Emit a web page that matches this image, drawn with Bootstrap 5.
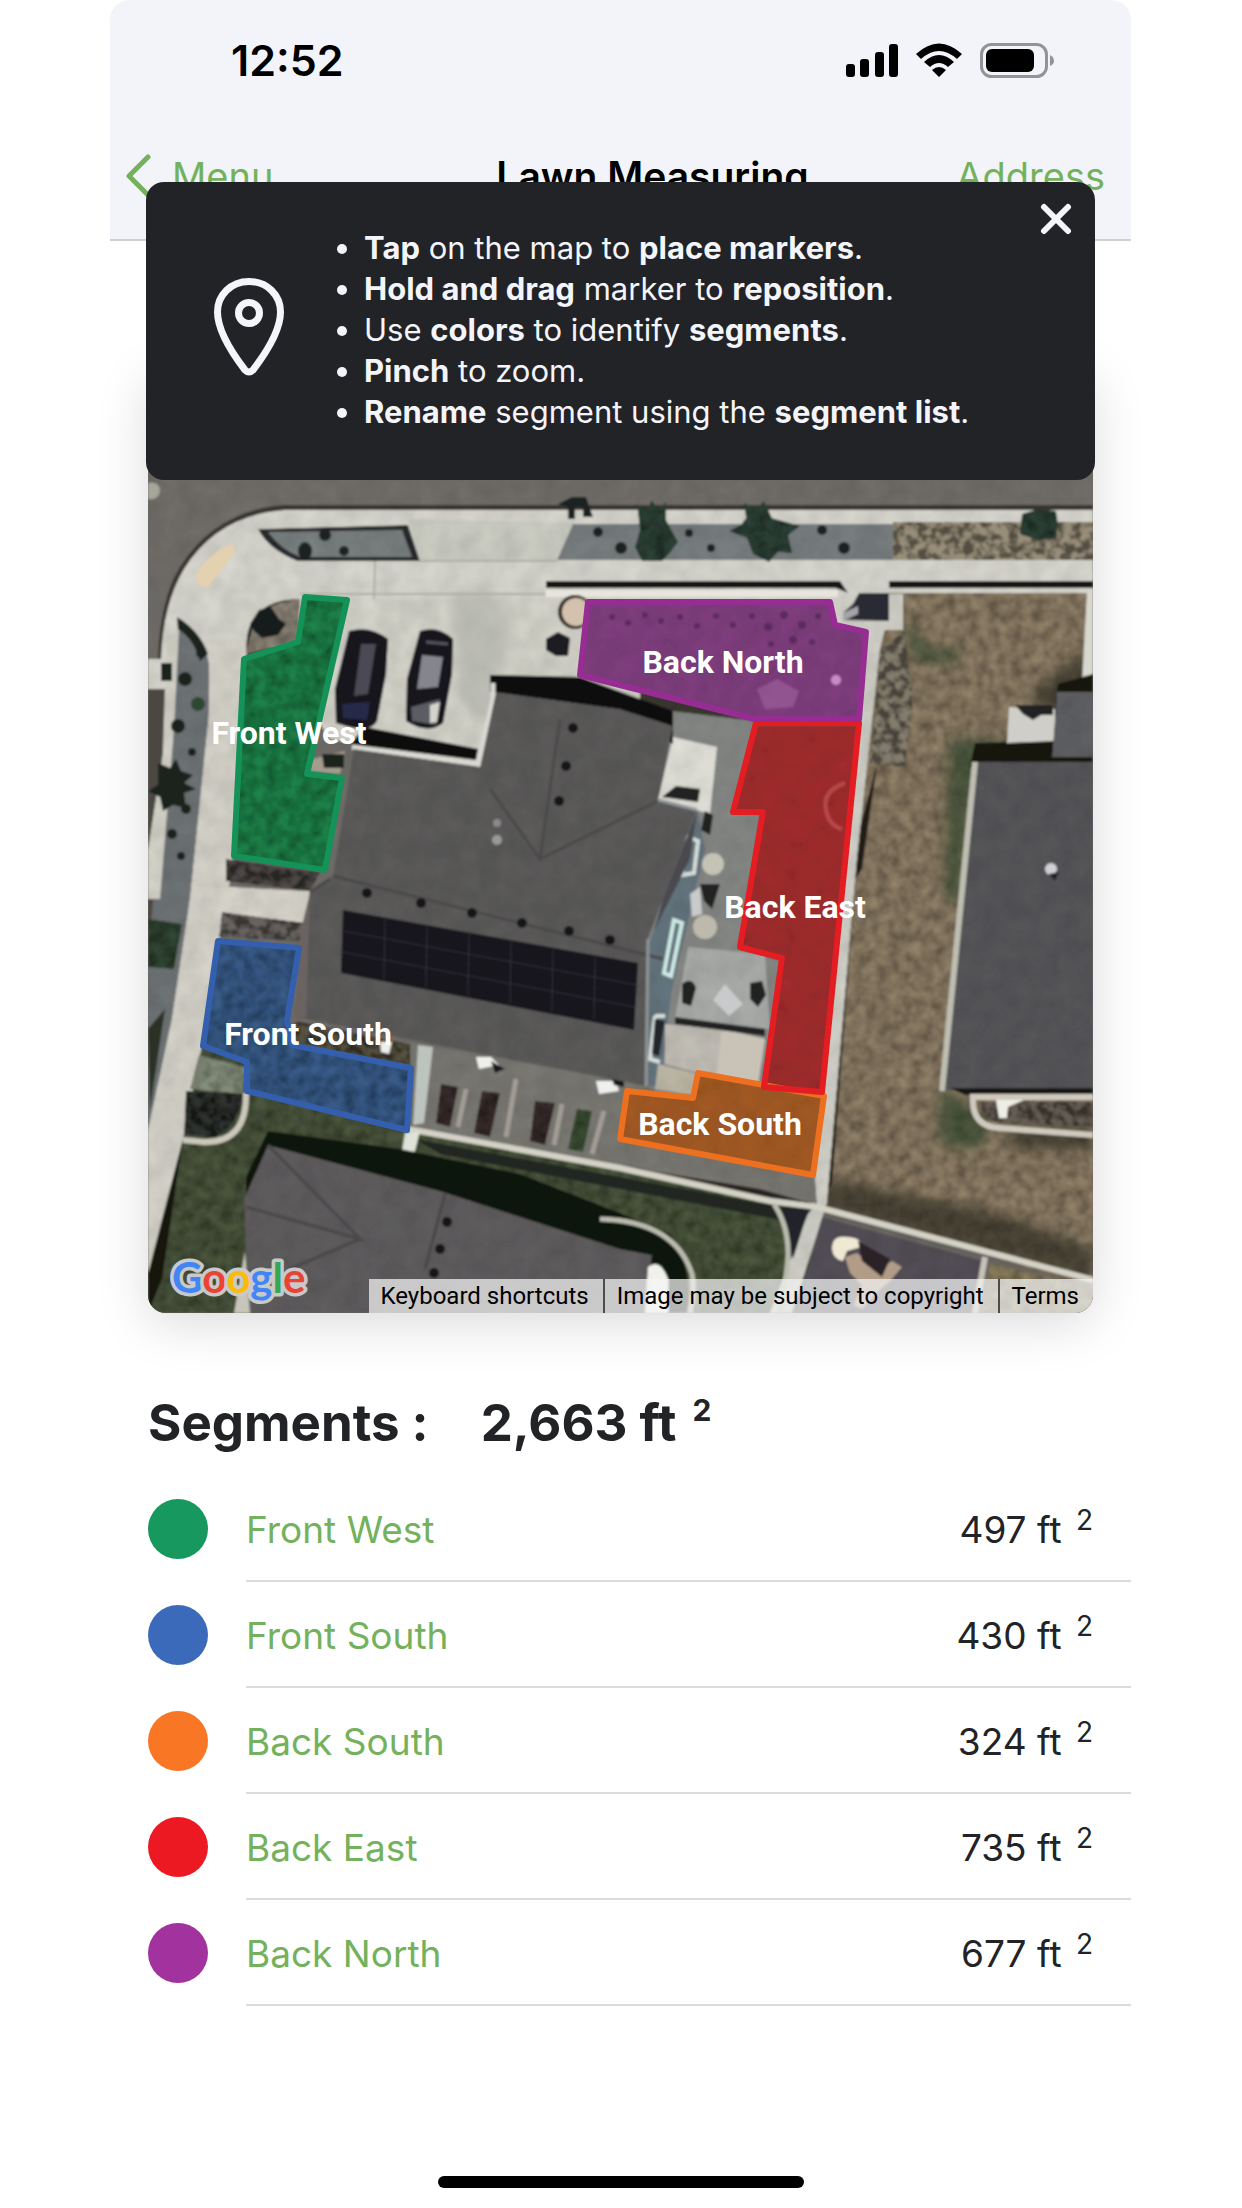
<!DOCTYPE html>
<html lang="en">
<head>
<meta charset="utf-8">
<meta name="viewport" content="width=device-width, initial-scale=1">
<title>Lawn Measuring</title>
<link href="https://cdn.jsdelivr.net/npm/bootstrap@5.3.0/dist/css/bootstrap.min.css" rel="stylesheet">
<style>
  body { font-family: Inter, "Noto Sans", sans-serif; color: #222326; background: #fff; }
  .phone { margin: 0 111px 0 110px; min-height: 100vh; }
  .top-area { background: #f3f4f9; border-bottom: 2px solid #cfd0d4; border-radius: 20px 20px 0 0; }
  .status { height: 120px; padding: 0 76px 0 121px; color: #000; }
  .clock { font-size: 43px; font-weight: 600; line-height: 48px; }
  .titlebar { height: 119px; padding: 0 26px 8px 14px; font-size: 38px; line-height: 48px; }
  .titlebar a, .seg-name { color: #74b15c; text-decoration: none; }
  .titlebar h1 { font-size: 39px; line-height: 48px; font-weight: 600; color: #000; padding-left: 76px; }
  .side { flex: 1 1 0; }
  .tips { top: 182px; left: 36px; right: 36px; height: 298px; background: #222327; color: #f4f5fa; border-radius: 18px; padding: 0 68px 4px; z-index: 5; }
  .tips ul { font-size: 31px; line-height: 41px; padding-left: 37px; margin-left: 43px; }
  .tips-close { top: 14px; right: 16px; width: 46px; height: 46px; color: inherit; }
  .map-card { margin: 128px 38px 0; border-radius: 18px; box-shadow: 0 10px 52px rgba(0,0,0,.15); }
  .map-clip { border-radius: 18px; background: #5a5a58; }
  .map-label { font: 700 32px Roboto, sans-serif; fill: #fff; text-anchor: middle; }
  .brand { font: 700 42px Lato, sans-serif; stroke: #c9c9c9; stroke-width: 7px; stroke-linejoin: round; paint-order: stroke; }
  .attrib { right: 0; bottom: 0; font: 400 24px/34px Roboto, sans-serif; }
  .attrib > * { color: #000; background: rgba(245,245,245,.72); padding: 0 14px 0 12px; text-decoration: none; border: 0; font: inherit; }
  .attrib > * + * { border-left: 2px solid #4c4c4a; }
  .segments { padding-left: 38px; }
  .seg-title { font-size: 51px; line-height: 60px; font-weight: 700; margin: 80px 0 23px; gap: 52px; }
  .seg-title sup { font-size: 30px; top: -20px; line-height: 0; margin-left: 4px; }
  .seg-row { height: 106px; gap: 38px; }
  .swatch { width: 60px; height: 60px; border-radius: 50%; flex: none; }
  .seg-body { border-bottom: 2px solid #dcdcde; padding: 4px 38px 0 0; font-size: 37px; line-height: 46px; }
  .seg-body sup { font-size: 28px; top: -13px; line-height: 0; margin-left: 4px; }
  .home-bar { width: 366px; height: 12px; border-radius: 6px; background: #000; margin: 170px auto 19px; }
</style>
</head>
<body>
<div class="phone position-relative d-flex flex-column">
  <header class="top-area">
    <div class="status d-flex align-items-center justify-content-between">
      <span class="clock">12:52</span>
      <svg width="210" height="36" viewBox="0 0 210 36" aria-hidden="true">
        <g><rect x="1" y="22" width="9" height="13" rx="3"/><rect x="15" y="17" width="9" height="18" rx="3"/><rect x="30" y="10" width="9" height="25" rx="3"/><rect x="44" y="2" width="9" height="33" rx="3"/></g>
        <path d="M71 12Q94-9 117 12L112 17Q94 1 76 17ZM79 20Q94 6 109 20L103 25Q94 17 85 25ZM87 28Q94 22 101 28L94 35Z"/>
        <rect x="136.500" y="2.500" width="65" height="32" rx="10" fill="none" stroke="#929397" stroke-width="3"/>
        <rect x="141" y="7" width="48" height="23" rx="6"/><path d="M205 13Q209 15 209 19Q209 22 205 24Z" fill="#929397"/>
      </svg>
    </div>
    <nav class="titlebar d-flex align-items-center">
      <a href="#" class="side d-flex align-items-center">
        <svg width="28" height="44" viewBox="0 0 28 44" class="me-3" aria-hidden="true"><path d="M24 3L5 22L24 41" fill="none" stroke="#74b15c" stroke-width="5" stroke-linecap="round" stroke-linejoin="round"/></svg>
        <span class="ps-1">Menu</span></a>
      <h1 class="m-0">Lawn Measuring</h1>
      <a href="#" class="side text-end">Address</a>
    </nav>
  </header>

  <aside class="tips position-absolute d-flex align-items-center" role="dialog" aria-label="Map tips">
    <svg width="70" height="98" viewBox="0 0 70 98" class="mb-1" aria-hidden="true" fill="none" stroke="#f4f5fa" stroke-width="7" stroke-linejoin="round">
      <path d="M35 3.500C17 3.500 3.500 17 3.500 34C3.500 52 18 75 31 92Q35 96 39 92C52 75 66.500 52 66.500 34C66.500 17 53 3.500 35 3.500Z"/><circle cx="35" cy="35" r="10.500"/></svg>
    <ul class="mb-0">
      <li><b>Tap</b> on the map to <b>place markers</b>.</li>
      <li><b>Hold and drag</b> marker to <b>reposition</b>.</li>
      <li>Use <b>colors</b> to identify <b>segments</b>.</li>
      <li><b>Pinch</b> to zoom.</li>
      <li><b>Rename</b> segment using the <b>segment list</b>.</li>
    </ul>
    <button type="button" class="tips-close btn p-0 border-0 position-absolute d-flex align-items-center justify-content-center" aria-label="Close">
      <svg width="32" height="32" viewBox="0 0 32 32" aria-hidden="true"><path d="M4 4L28 28M28 4L4 28" stroke="#f4f5fa" stroke-width="6" stroke-linecap="round"/></svg>
    </button>
  </aside>

  <main>
    <section class="map-card position-relative">
      <div class="map-clip overflow-hidden position-relative">
      <svg class="d-block w-100" viewBox="148 370 945 944" role="img" aria-label="Satellite map with lawn segments">
        <defs>
          <filter id="grain" x="0" y="0" width="100%" height="100%">
            <feTurbulence type="fractalNoise" baseFrequency="0.09" numOctaves="4" seed="4" result="n"/>
            <feColorMatrix in="n" type="matrix" values="1.5 0 0 0 -.25  1.5 0 0 0 -.25  1.5 0 0 0 -.25  0 0 0 0 1" result="g"/>
            <feComposite in="SourceGraphic" in2="g" operator="arithmetic" k1=".9" k2=".55" k3="0" k4="0" result="m"/>
            <feComposite in="m" in2="SourceGraphic" operator="in"/>
          </filter>
          <filter id="fine" x="0" y="0" width="100%" height="100%">
            <feTurbulence type="fractalNoise" baseFrequency="0.05" numOctaves="4" seed="9" result="n"/>
            <feColorMatrix in="n" type="matrix" values="1 0 0 0 0  1 0 0 0 0  1 0 0 0 0  0 0 0 0 1" result="g"/>
            <feComposite in="SourceGraphic" in2="g" operator="arithmetic" k1=".3" k2=".85" k3="0" k4="0" result="m"/>
            <feComposite in="m" in2="SourceGraphic" operator="in"/>
          </filter>
          <filter id="rocks" x="0" y="0" width="100%" height="100%">
            <feTurbulence type="fractalNoise" baseFrequency="0.11" numOctaves="3" seed="21" result="n"/>
            <feColorMatrix in="n" type="matrix" values="4 0 0 0 -1.500  4 0 0 0 -1.500  4 0 0 0 -1.500  0 0 0 0 1" result="g"/>
            <feComposite in="SourceGraphic" in2="g" operator="arithmetic" k1=".9" k2=".35" k3="0" k4="0" result="m"/>
            <feComposite in="m" in2="SourceGraphic" operator="in"/>
          </filter>
          <filter id="soft"><feGaussianBlur stdDeviation="6"/></filter>
          <filter id="photo" x="0" y="0" width="100%" height="100%"><feGaussianBlur stdDeviation="1"/></filter>
        </defs>

        <g filter="url(#photo)">
        <rect x="140" y="360" width="960" height="960" fill="#6c6965"/>
        <!-- street and pavement -->
        <g filter="url(#fine)">
          <rect x="148" y="370" width="945" height="944" fill="#6c6965"/>
          <path d="M1093 506H283Q215 512 180 568Q160 600 158 660V720H1093Z" fill="#38352f"/>
          <path d="M1093 511H285Q218 516 184 570Q163 605 161 660H148V692H164L157 900L148 960V1275L185 1140L232 870L246 655L330 600L480 770L560 680H1093Z" fill="#cfcec6"/>
          <path d="M240 600H640V700L480 768L330 740Z" fill="#cbcac1"/>
          <path d="M408 520L575 524L556 562H420Z" fill="#c3c5bb"/>
        </g>
        <path d="M450 590h45l15 50l-20 90l-30-30z" fill="#aeb0a8" opacity=".6" filter="url(#soft)"/>
        <path d="M300 595H545M375 562L374 600M420 562H557M210 781H234" stroke="#aeada5" stroke-width="2" fill="none"/>
        <path d="M148 484q12-2 12 8q-2 10-12 8z" fill="#a7a69b"/>
        <path d="M196 575Q212 552 232 545Q238 552 228 562L208 588Q196 588 196 575Z" fill="#e4d1b0"/>
        <g filter="url(#fine)">
          <path d="M258 530L408 526L420 562H297Q268 550 258 530Z" fill="#25292a"/>
          <path d="M268 533L402 531L412 558H300Q280 550 268 533Z" fill="#747a7a"/>
          <path d="M573 525H893V561H557Z" fill="#73797a"/>
        </g>
        <g fill="#1c2321"><ellipse cx="305" cy="552" rx="7" ry="9"/><circle cx="325" cy="536" r="6"/><circle cx="344" cy="552" r="5"/><circle cx="598" cy="533" r="5"/><circle cx="621" cy="549" r="6"/><circle cx="689" cy="534" r="4"/><circle cx="711" cy="549" r="4"/><circle cx="822" cy="531" r="5"/><circle cx="844" cy="549" r="6"/><path d="M558 505l14-7h14l7 20h-10v-10h-8v12h-7v-12z"/></g>
        <path d="M893 523H1093V561H893Z" fill="#89806d" filter="url(#rocks)"/>
        <g fill="#26382f" filter="url(#grain)"><path d="M637 505l12 6 2-10 8 9 7-7v18l12 22-8 11-8 8h-20l-7-14 5-17z"/><path d="M744 504l13 6 7-8 8 17 28 8-12 9 4 18-14-1-9 10-16-8-6-16-18-7 12-6 5-7z"/><path d="M1022 515l16-5 18 2 2 14-2 13-18 2-18-6z"/></g>
        <path d="M546 582H840L848 594L836 589H546ZM889 582H1093V589H889Z" fill="#171715"/>
        <path d="M546 591H838V598H546Z" fill="#e7e5dd"/>

        <!-- left verge -->
        <path d="M148 690H165L155 1000L148 1060Z" fill="#4c4742"/>
        <g filter="url(#fine)">
          <path d="M178 620Q206 640 209 665L209 715L190 900L172 1020L148 1133V950L163 800L175 700Z" fill="#696e70"/>
          <path d="M167 640L179 630L174 730L160 900L148 900V850L165 740Z" fill="#cbcac0"/>
        </g>
        <g fill="#1a241f"><path d="M177 618Q200 632 208 655L200 662Q194 640 178 630Z"/><circle cx="201" cy="654" r="5"/><circle cx="185" cy="680" r="7"/><circle cx="198" cy="705" r="7" fill="#2d4633"/><circle cx="178" cy="727" r="7"/><circle cx="192" cy="753" r="4"/><path d="M158 764l12 5 6-9 5 12 12 4-9 8 12 6-12 4 2 15-13-3-10 6-3-14-12-6 10-6z"/><circle cx="186" cy="810" r="5"/><circle cx="172" cy="835" r="5"/><circle cx="181" cy="857" r="4"/><rect x="161" y="664" width="11" height="18"/></g>
        <path d="M148 920L182 925L174 970L148 968Z" fill="#293b2b" filter="url(#grain)"/>
        <path d="M148 1030L165 1010L150 1110Z" fill="#2b3328"/>

        <!-- lawns to the south -->
        <path d="M148 1270L202 1047L250 1066L415 1128L620 1170L820 1205L800 1314H148Z" fill="#404a34" filter="url(#grain)"/>
        <path d="M183 1140L148 1270V1314L162 1280Z" fill="#14170f"/>
        <path d="M210 640L248 640L232 857L222 913L202 1047L183 1140L148 1275V1130L172 1020L190 900L208 740Z" fill="#cccac1" filter="url(#fine)"/>
        <path d="M195 886L310 892L306 924L222 915Z" fill="#cfccc3" filter="url(#fine)"/>
        <path d="M222 913L304 924L302 942L219 938Z" fill="#5e5956" filter="url(#rocks)"/>
        <path d="M226 860L320 873L310 892L226 882Z" fill="#45403e" filter="url(#rocks)"/>
        <path d="M199 1056L245 1068L243 1095L190 1090Z" fill="#77806f" filter="url(#grain)"/>
        <path d="M186 1092L243 1095Q240 1125 215 1138L184 1135Z" fill="#292c29" filter="url(#rocks)"/>
        <path d="M246 1094Q247 1144 204 1143L183 1141" fill="none" stroke="#cbc8bb" stroke-width="6"/>

        <!-- corner bed -->
        <path d="M246 655Q244 600 300 600L298 643Z" fill="#7b7468" filter="url(#grain)"/>
        <path d="M250 625l9-14 12-3 8 12 7 5-8 11-16 3-8-7zM247 650Q244 602 300 600Q254 606 252 630Z" fill="#181a1c"/>

        <!-- east yard -->
        <g filter="url(#grain)">
          <path d="M883 594H1093V1290L817 1205Z" fill="#7c6e59"/>
        </g>
        <g filter="url(#soft)" opacity=".65"><path d="M900 620L930 650H960L955 665L915 660ZM950 740L1000 740L970 800L960 900H945ZM940 1090L990 1120L980 1150L940 1145Z" fill="#263f25"/><path d="M1035 690L1090 650V710H1035ZM830 1180L1000 1215L1093 1250V1280L820 1210ZM1010 1130H1093V1150H1010Z" fill="#25271c"/></g>
        <path d="M880 650L905 632L913 700L905 768L870 765Z" fill="#777062" filter="url(#rocks)"/>
        <path d="M877 765L862 870L855 880L832 1185L822 1200L846 880Z" fill="#211f19"/>
        <path d="M842 595H903V631H885L880 650L857 860L827 1204L792 1314H770L812 1204L842 870L870 632L843 624Z" fill="#c8c8c0" filter="url(#fine)"/>
        <path d="M844 613L853 605L859 594H889V622L845 621Z" fill="#2c2b34"/><path d="M843 614l15-7v8l-15 7z" fill="#a4a4aa"/>
        <path d="M1087 592H1093V675L1082 683Z" fill="#d8d7d0"/>

        <!-- neighbouring houses -->
        <path d="M1058 685L1093 675V775L970 768L975 744L1050 742Z" fill="#121310"/>
        <path d="M1009 708L1055 710V742L1007 744Z" fill="#cfcec8"/><path d="M1015 706h38v10h-12l-8 5-10-6z" fill="#222"/>
        <g filter="url(#fine)"><path d="M1057 693H1093V758H1052Z" fill="#5b5c5f"/><path d="M975 763H1093V1091H944Z" fill="#525255"/></g>
        <path d="M975 763L942 1092" stroke="#bdbdb1" stroke-width="6"/><path d="M950 1089H1093V1096H965Z" fill="#141414"/>
        <circle cx="1051" cy="870" r="6" fill="#cfd0d2"/><path d="M1049 875l10-2-4 9z" fill="#232326"/>
        <path d="M970 1098H1093M973 1100Q972 1128 1000 1129L1093 1136" fill="none" stroke="#cfc9bd" stroke-width="6"/>
        <path d="M980 1103H1093V1128L1000 1124Q981 1120 980 1103Z" fill="#5b534b" filter="url(#rocks)"/><path d="M996 1101h28l-16 7-1 11h-8z" fill="#eeeee6"/>

        <!-- east patio -->
        <g filter="url(#fine)">
          <path d="M673 712L755 722L733 813L760 815L740 950L782 962L764 1090L645 1100L640 940Z" fill="#808280"/>
          <path d="M673 738L717 748L710 815L658 800Z" fill="#d8d8d0"/>
          <path d="M697 810L663 900L649 945L648 1087L660 1087L672 990L705 850Z" fill="#607079"/>
          <path d="M688 948L765 955L770 1030L675 1020Z" fill="#a3a5a3"/>
          <path d="M665 1025L722 1030L765 1040L758 1086L720 1080L665 1065Z" fill="#b9b6ae"/>
          <path d="M658 1065L698 1075L692 1096L655 1090Z" fill="#b6b09f"/>
        </g>
        <path d="M722 1030L765 1040L758 1086L716 1078Z" fill="#c8c3b6"/>
        <path d="M662 798L676 787L700 790L698 803ZM705 812l8 4-3 20-9-5zM675 1018L765 1030V1037L675 1025ZM682 985q10-8 14 4l-5 18-9-3zM750 984l12-2 4 14-8 12-8-8zM700 885l20 0-8 25-8-8z" fill="#202224"/>
        <g fill="none" stroke="#d5dbd9" stroke-width="4"><path d="M688 838L698 842L694 874L682 876Z"/><path d="M674 921L682 924L671 977L664 974Z" stroke="#cdeae4"/><path d="M655 1017H665M655 1017L650 1060L660 1063"/></g>
        <circle cx="713" cy="865" r="11" fill="#c5c2b6"/><circle cx="705" cy="928" r="12" fill="#bdb9ac"/><path d="M655 1020l10 2-6 35-7-2z" fill="#23262a"/>
        <path d="M690 895L700 888L702 915L692 918ZM725 985l18 20-14 12-16-16z" fill="#c9cacb"/>

        <!-- south garden beds -->
        <path d="M295 1023L645 1085L660 1095L815 1176L817 1205L620 1165L415 1130L410 1050Z" fill="#74736d" filter="url(#fine)"/>
        <path d="M296 1022L410 1045V1067L290 1045Z" fill="#4d4838" filter="url(#rocks)"/>
        <path d="M418 1046L433 1048L424 1124L413 1126Z" fill="#bdc3be"/>
        <g filter="url(#grain)" fill="#2f2423"><path d="M441 1085L458 1088L450 1128L436 1124Z"/><path d="M482 1092L500 1094L490 1138L474 1134Z"/><path d="M535 1102L555 1104L545 1146L530 1142Z"/><path d="M577 1110L592 1112L583 1153L568 1150Z" fill="#30422a"/></g>
        <g stroke="#a29c94" stroke-width="5"><path d="M466 1090L458 1128M516 1080L506 1138M562 1105L554 1146M604 1112L592 1155"/></g>
        <path d="M476 1058h15l8 8-20 4zM596 1082h20l3 10-20 3zM380 1043h12l-3 12-8-2z" fill="#eef0ee"/><path d="M491 1062l14 8-10 4zM612 1080h12v8l-10-2z" fill="#16181a"/>
        <path d="M415 1140L620 1178L770 1206L812 1210L800 1225L620 1190L440 1155Z" fill="#222820"/>
        <path d="M408 1130L620 1169L770 1202L817 1208L1093 1281" fill="none" stroke="#d4d2c6" stroke-width="6"/>
        <path d="M640 1170L760 1190L810 1204L770 1198L620 1165Z" fill="#2a2422"/>
        <path d="M405 1134L420 1132L415 1152L400 1164Z" fill="#dfe2d8"/>

        <!-- south house -->
        <path d="M268 1132L400 1150L520 1175L620 1214L670 1235Q692 1262 688 1314H600L246 1200V1178Z" fill="#11130f"/>
        <path d="M268 1146L440 1192L620 1250L652 1256L645 1314H248L244 1200Z" fill="#5b595a" filter="url(#fine)"/>
        <path d="M445 1195L425 1270M268 1146L360 1240L246 1208M360 1240L290 1270" stroke="#494849" stroke-width="3" fill="none"/>
        <g fill="#121214"><circle cx="447" cy="1223" r="5"/><circle cx="440" cy="1250" r="5"/><circle cx="434" cy="1274" r="5"/></g>
        <path d="M245 1252L250 1314H234Z" fill="#c7c5ba"/>
        <path d="M600 1220Q675 1222 692 1275Q695 1290 690 1314M774 1205Q792 1232 787 1270L780 1314" fill="none" stroke="#b9bbae" stroke-width="5"/>
        <path d="M648 1268Q660 1258 668 1280V1314H645Z" fill="#f0f0ec"/>
        <path d="M782 1210L808 1212L793 1260Q790 1230 782 1210Z" fill="#22222a"/>
        <path d="M822 1218L984 1262L975 1314H795Z" fill="#504b53" filter="url(#fine)"/>
        <path d="M985 1258L975 1314" stroke="#c6c2b9" stroke-width="6"/><path d="M990 1264L1093 1290V1314H980Z" fill="#786e51" filter="url(#grain)"/>
        <path d="M832 1250q0-14 14-12q16 0 15 10l-14 4-4 10q-10-2-11-12z" fill="#efe9d4"/>
        <path d="M845 1258l12-4 20 18 15-10 10 6-12 14-12 10-16 18-8-4 8-20-12-12z" fill="#b19c87"/><path d="M858 1242l32 18-8 18-20-16z" fill="#2a2228"/>

        <!-- main house -->
        <path d="M490 676L580 678L673 712V745L620 712L490 693ZM365 728L478 750L476 761L350 745Z" fill="#0b0c0b"/>
        <path d="M493 684V700L478 765L352 748" fill="none" stroke="#d9d8d2" stroke-width="5"/>
        <path d="M496 693L620 710L673 727L658 800L697 810L663 900L648 940L646 1087L295 1018L304 935L310 893L333 877L354 750L480 768Z" fill="#585756" filter="url(#fine)"/>
        <g stroke="#4b4a4a" stroke-width="3" fill="none"><path d="M560 720L540 860L490 790M540 860L658 802M333 877L663 960M310 893L330 880"/></g>
        <path d="M300 935L310 893L306 1018H295Z" fill="#6b6462"/>
        <path d="M663 900L697 812L690 860L655 930Z" fill="#48494f"/>
        <path d="M648 940L646 1087M658 801L697 811" stroke="#8f9494" stroke-width="3"/>
        <path d="M343 911L638 964L634 1031L341 974Z" fill="#18151c"/>
        <path d="M343 932L637 986M342 953L635 1008M385 920L384 980M427 927L426 988M469 935L468 996M511 942L510 1004M553 950L552 1012M595 958L594 1020" stroke="#35323c" stroke-width="1" fill="none"/>
        <g fill="#171719"><circle cx="573" cy="729" r="5"/><circle cx="566" cy="767" r="5"/><circle cx="559" cy="802" r="5"/><circle cx="367" cy="894" r="5"/><circle cx="421" cy="904" r="5"/><circle cx="472" cy="914" r="5"/><circle cx="522" cy="924" r="5"/><circle cx="569" cy="932" r="5"/><circle cx="610" cy="941" r="5"/></g>
        <circle cx="497" cy="824" r="4" fill="#8a8a8a"/><circle cx="497" cy="841" r="5" fill="#9a9a9a"/>
        <path d="M312 760L345 752L340 775L310 772Z" fill="#a39d8d"/><path d="M322 755h22v14h-20z" fill="#1f241d"/>

        <!-- entrance corner, boulders -->
        <circle cx="575" cy="613" r="17" fill="#2d2624"/><circle cx="576" cy="613" r="14" fill="#d5c2ae"/><path d="M546 640l12-7 12 6-2 18-12 0-10-6z" fill="#1b1c24"/>

        <!-- cars -->
        <path d="M349 632Q370 626 388 640L386 675L377 722Q370 736 336 724L335 690Z" fill="#15151d"/>
        <path d="M361 645L376 645L368 695L354 697Z" fill="#4c4a53"/><path d="M342 705l28-2-3 18-24-2z" fill="#28294a"/>
        <path d="M420 632Q438 626 453 640L452 675L443 724Q428 736 406 722L407 680Z" fill="#15151d"/>
        <path d="M422 656L443 658L438 688L417 690Z" fill="#85868d"/><path d="M411 708L440 700L436 726L412 722Z" fill="#5c5b64"/><path d="M430 706l10-3-3 20-7 1z" fill="#d5d3ce"/>
        <path d="M426 643L448 645" stroke="#53545c" stroke-width="3"/>

        <!-- tinted ground inside the measured segments -->
        <g filter="url(#grain)"><path d="M305 598L347 601L307 775L342 779L325 871L234 857L244 660L298 643Z" fill="#18713f"/>
          <path d="M218 942L299 949L287 1021L292 1046L411 1069L407 1131L247 1092V1063L203 1047Z" fill="#304f77"/></g>
        <g filter="url(#fine)"><path d="M588 603H830L835 626L866 633L859 720H755L580 676Z" fill="#7a3b79"/>
          <path d="M756 726H859L822 1093L764 1088L782 959L740 948L763 813H733Z" fill="#9a2a2b"/>
          <path d="M627 1092L693 1099L698 1074L824 1097L813 1176L620 1140Z" fill="#9c5620"/></g>
        <g fill="#4f2350" opacity=".7"><circle cx="612" cy="618" r="3"/><circle cx="628" cy="624" r="3"/><circle cx="645" cy="616" r="3"/><circle cx="661" cy="622" r="3"/><circle cx="680" cy="618" r="3"/><circle cx="697" cy="627" r="3"/><circle cx="716" cy="617" r="3"/><circle cx="733" cy="626" r="3"/><circle cx="752" cy="617" r="3"/><circle cx="768" cy="628" r="4"/><circle cx="784" cy="616" r="4"/><circle cx="802" cy="626" r="4"/><circle cx="818" cy="617" r="3"/><circle cx="793" cy="641" r="4"/><circle cx="812" cy="643" r="3"/><circle cx="771" cy="645" r="3"/></g>
        <path d="M757 690l20-10 22 12-6 16-28 2z" fill="#a362a2" opacity=".6"/><circle cx="836" cy="681" r="5" fill="#c98cc8"/>
        <path d="M845 784Q822 792 826 810Q828 826 842 830" fill="none" stroke="#b9484a" stroke-width="4"/>
        </g>

        <!-- segment outlines -->
        <g fill="none" stroke-width="6" stroke-linejoin="round">
          <path d="M305 598L347 601L307 775L342 779L325 871L234 857L244 660L298 643Z" stroke="#159258"/>
          <path d="M218 942L299 949L287 1021L292 1046L411 1069L407 1131L247 1092V1063L203 1047Z" stroke="#345fae"/>
          <path d="M627 1092L693 1099L698 1074L824 1097L813 1176L620 1140Z" stroke="#ed7020"/>
          <path d="M756 724H859L822 1093L764 1088L782 959L740 948L763 813H733Z" stroke="#e31d22"/>
          <path d="M588 603H830L835 626L866 633L859 720H755L580 676Z" stroke="#972c92"/>
        </g>
        <text class="map-label" x="289" y="745">Front West</text>
        <text class="map-label" x="723" y="674">Back North</text>
        <text class="map-label" x="795" y="919">Back East</text>
        <text class="map-label" x="308" y="1046">Front South</text>
        <text class="map-label" x="720" y="1136">Back South</text>
        <text class="brand" x="172" y="1294"><tspan fill="#4285f4">G</tspan><tspan fill="#ea4335">o</tspan><tspan fill="#fbbc05">o</tspan><tspan fill="#4285f4">g</tspan><tspan fill="#34a853">l</tspan><tspan fill="#ea4335">e</tspan></text>
      </svg>
      <div class="attrib position-absolute d-flex">
        <button type="button">Keyboard shortcuts</button><span>Image may be subject to copyright</span><a href="#">Terms</a>
      </div>
      </div>
    </section>

    <section class="segments">
      <h2 class="seg-title d-flex"><span>Segments :</span><span>2,663 ft <sup>2</sup></span></h2>
      <div class="seg-row d-flex align-items-center"><span class="swatch" style="background:#16985e"></span><div class="seg-body flex-grow-1 h-100 d-flex align-items-center justify-content-between"><a href="#" class="seg-name">Front West</a><span>497 ft <sup>2</sup></span></div></div>
      <div class="seg-row d-flex align-items-center"><span class="swatch" style="background:#3b6aba"></span><div class="seg-body flex-grow-1 h-100 d-flex align-items-center justify-content-between"><a href="#" class="seg-name">Front South</a><span>430 ft <sup>2</sup></span></div></div>
      <div class="seg-row d-flex align-items-center"><span class="swatch" style="background:#f87624"></span><div class="seg-body flex-grow-1 h-100 d-flex align-items-center justify-content-between"><a href="#" class="seg-name">Back South</a><span>324 ft <sup>2</sup></span></div></div>
      <div class="seg-row d-flex align-items-center"><span class="swatch" style="background:#ed1922"></span><div class="seg-body flex-grow-1 h-100 d-flex align-items-center justify-content-between"><a href="#" class="seg-name">Back East</a><span>735 ft <sup>2</sup></span></div></div>
      <div class="seg-row d-flex align-items-center"><span class="swatch" style="background:#a2329d"></span><div class="seg-body flex-grow-1 h-100 d-flex align-items-center justify-content-between"><a href="#" class="seg-name">Back North</a><span>677 ft <sup>2</sup></span></div></div>
    </section>
  </main>
  <div class="home-bar mb-auto"></div>
</div>
<script src="https://cdn.jsdelivr.net/npm/bootstrap@5.3.0/dist/js/bootstrap.bundle.min.js"></script>
</body>
</html>
